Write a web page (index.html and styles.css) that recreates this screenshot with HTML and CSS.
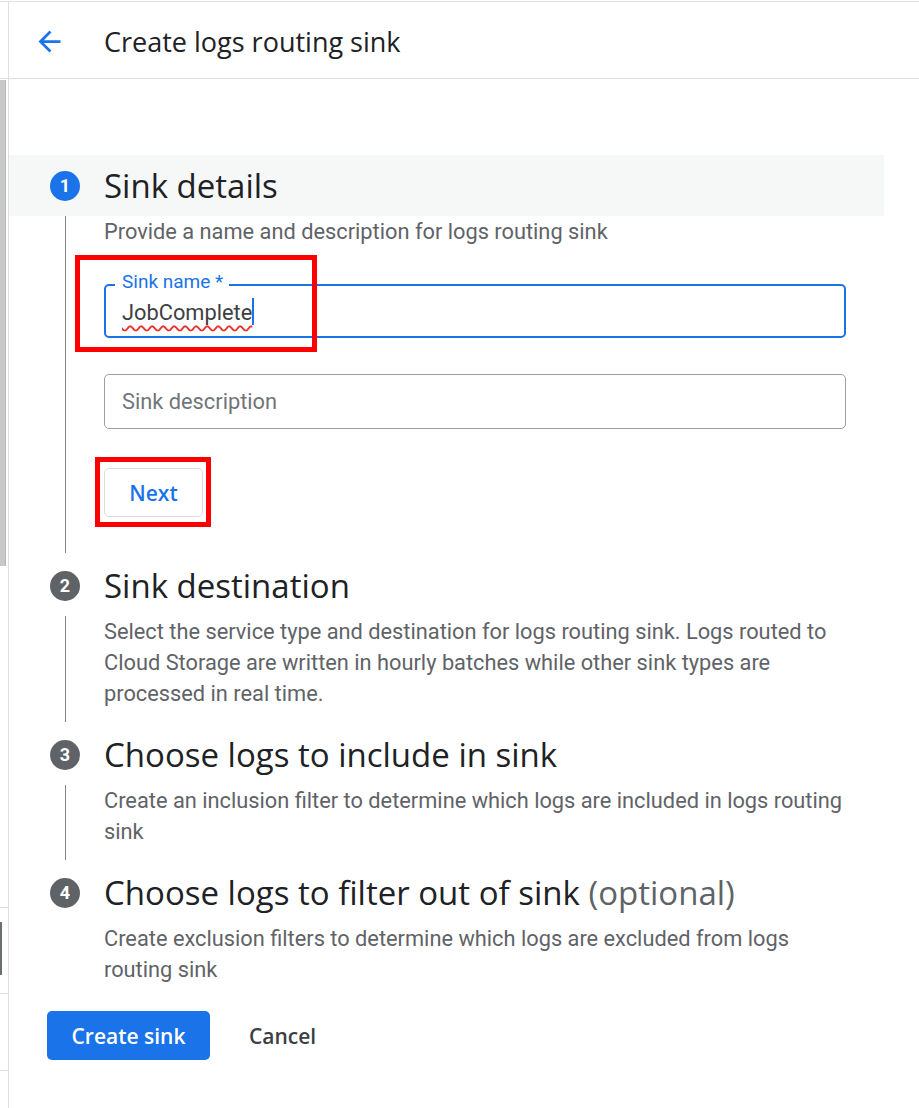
FILE: index.html
```html
<!DOCTYPE html>
<html lang="en">
<head>
<meta charset="utf-8">
<title>Create logs routing sink</title>
<link rel="stylesheet" href="styles.css">
</head>
<body>
<div class="page">
  <aside class="rail">
    <div class="rail-top"></div>
    <div class="rail-thumb"></div>
    <div class="rail-fill"></div>
    <div class="rail-cell rail-cell-a"><div class="rail-mark"></div></div>
    <div class="rail-cell rail-cell-b"></div>
    <div class="rail-cell rail-cell-c"></div>
  </aside>
  <main class="main">
    <header class="topbar">
      <svg class="back" viewBox="0 0 24 24" aria-hidden="true"><path d="M20 11H7.83l5.59-5.59L12 4l-8 8 8 8 1.41-1.41L7.83 13H20v-2z"/></svg>
      <h1 class="title">Create logs routing sink</h1>
    </header>
    <div class="content">
      <section class="step step-active">
        <div class="step-head"><span class="num num-active">1</span><h2 class="step-title">Sink details</h2></div>
        <div class="step-body step-line step-body-first">
          <p class="desc">Provide a name and description for logs routing sink</p>
          <div class="field field-focus">
            <span class="float-label">Sink name *</span>
            <span class="value">JobComplete</span><span class="caret"></span>
            <span class="mark mark-name"></span>
          </div>
          <div class="field field-plain">
            <span class="placeholder">Sink description</span>
          </div>
          <div class="btn-wrap">
            <button class="btn-next">Next</button>
            <span class="mark mark-next"></span>
          </div>
        </div>
      </section>
      <section class="step">
        <div class="step-head"><span class="num">2</span><h2 class="step-title">Sink destination</h2></div>
        <div class="step-body step-line">
          <p class="desc">Select the service type and destination for logs routing sink. Logs routed to<br>Cloud Storage are written in hourly batches while other sink types are<br>processed in real time.</p>
        </div>
      </section>
      <section class="step">
        <div class="step-head"><span class="num">3</span><h2 class="step-title">Choose logs to include in sink</h2></div>
        <div class="step-body step-line">
          <p class="desc">Create an inclusion filter to determine which logs are included in logs routing<br>sink</p>
        </div>
      </section>
      <section class="step">
        <div class="step-head"><span class="num">4</span><h2 class="step-title">Choose logs to filter out of sink <span class="optional">(optional)</span></h2></div>
        <div class="step-body">
          <p class="desc">Create exclusion filters to determine which logs are excluded from logs<br>routing sink</p>
        </div>
      </section>
      <div class="actions">
        <button class="btn-primary">Create sink</button>
        <button class="btn-text">Cancel</button>
      </div>
    </div>
  </main>
</div>
</body>
</html>
```

FILE: styles.css
```css
* { box-sizing: border-box; }
html, body { margin: 0; padding: 0; background: #fff; }
body { padding-top: 1px; font-family: Roboto, "Liberation Sans", sans-serif; color: #202124; }

.page {
  display: flex;
  border-top: 1px solid #e3e3e3;
  min-height: 1107px;
}

/* left rail */
.rail {
  width: 9px;
  flex: none;
  border-right: 1px solid #dedede;
  display: flex;
  flex-direction: column;
}
.rail-top { height: 77px; border-bottom: 1px solid #dedede; }
.rail-thumb { margin-top: 1px; height: 486px; width: 6px; background: #c8c8c8; border-right: 1px solid #b9b9b9; }
.rail-fill { flex: 1; }
.rail-cell { border-top: 1px solid #dedede; }
.rail-cell-a { height: 86px; padding-top: 14px; }
.rail-cell-b { height: 77px; }
.rail-cell-c { height: 38px; }
.rail-mark { width: 2px; height: 53px; background: #6b6f73; }

/* main */
.main { flex: 1; min-width: 0; }
.topbar {
  height: 77px;
  border-bottom: 1px solid #dedede;
  display: flex;
  align-items: center;
  padding-left: 24px;
  padding-top: 2px;
}
.back { width: 33px; height: 33px; fill: #1a73e8; flex: none; }
.title {
  margin: 0 0 0 38px;
  font-family: "Open Sans", sans-serif;
  font-weight: 400;
  font-size: 27px;
  color: #202124;
}

.content { padding-top: 76px; padding-right: 35px; }

.step { margin-bottom: 2px; }
.step-head {
  height: 61px;
  display: flex;
  align-items: center;
  padding-left: 41px;
}
.step-active .step-head { background: #f6f7f7; }
.num {
  width: 30px;
  height: 30px;
  border-radius: 50%;
  background: #5f6368;
  color: #fff;
  font-family: Roboto, sans-serif;
  font-weight: 700;
  font-size: 18px;
  display: flex;
  align-items: center;
  justify-content: center;
  flex: none;
}
.num-active { background: #1a73e8; }
.step-title {
  margin: 0 0 0 24px;
  font-family: "Open Sans", sans-serif;
  font-weight: 400;
  font-size: 33px;
  line-height: 40px;
  color: #202124;
  white-space: nowrap;
}
.optional { color: #5f6368; }

.step-body {
  margin-left: 56px;
  border-left: 1px solid transparent;
  padding: 0 38px 13px 38px;
}
.step-line { border-left-color: #80868b; }
.step-body-first { padding-bottom: 36px; }

.desc {
  margin: 0;
  font-size: 21.8px;
  line-height: 31px;
  color: #5f6368;
  white-space: nowrap;
}

.field {
  position: relative;
  display: flex;
  align-items: center;
  border-radius: 5px;
  font-size: 21.8px;
}
.field-focus {
  margin-top: 37px;
  height: 54px;
  border: 2px solid #1a73e8;
  padding-left: 16px;
}
.field-plain {
  margin-top: 36px;
  height: 55px;
  border: 1px solid #9aa0a6;
  padding-left: 17px;
}
.float-label {
  position: absolute;
  top: -15px;
  left: 9px;
  padding: 0 6px 0 7px;
  background: #fff;
  color: #1a73e8;
  font-size: 19px;
  line-height: 22px;
}
.value {
  color: #3c4043;
  text-decoration: underline wavy #e8332b;
  text-decoration-thickness: 1.5px;
  text-underline-offset: 5px;
  padding-top: 2px;
}
.caret {
  display: inline-block;
  width: 2px;
  height: 27px;
  background: #1a73e8;
  margin-left: 0;
}
.placeholder { color: #70757a; }

.btn-wrap { position: relative; margin-top: 39px; width: 99px; }
.btn-next {
  width: 99px;
  height: 49px;
  border: 1px solid #dadce0;
  border-radius: 5px;
  background: #fff;
  color: #1a73e8;
  font-family: "Open Sans", sans-serif;
  font-weight: 600;
  font-size: 21px;
  padding: 0;
  display: block;
}

/* red annotation frames lying over the screenshot */
.mark { position: absolute; border: 5px solid #ff0000; pointer-events: none; }
.mark-name { left: -31px; top: -31px; width: 242px; height: 97px; }
.mark-next { left: -9px; top: -11px; width: 116px; height: 70px; }

.actions {
  display: flex;
  align-items: center;
  padding-left: 38px;
  margin-top: 13px;
}
.btn-primary {
  width: 163px;
  height: 49px;
  border: none;
  border-radius: 5px;
  background: #1a73e8;
  color: #fff;
  font-family: "Open Sans", sans-serif;
  font-weight: 600;
  font-size: 21px;
  padding: 0;
}
.btn-text {
  margin-left: 39px;
  border: none;
  background: none;
  padding: 0;
  color: #3c4043;
  font-family: "Open Sans", sans-serif;
  font-weight: 600;
  font-size: 21px;
}
```
